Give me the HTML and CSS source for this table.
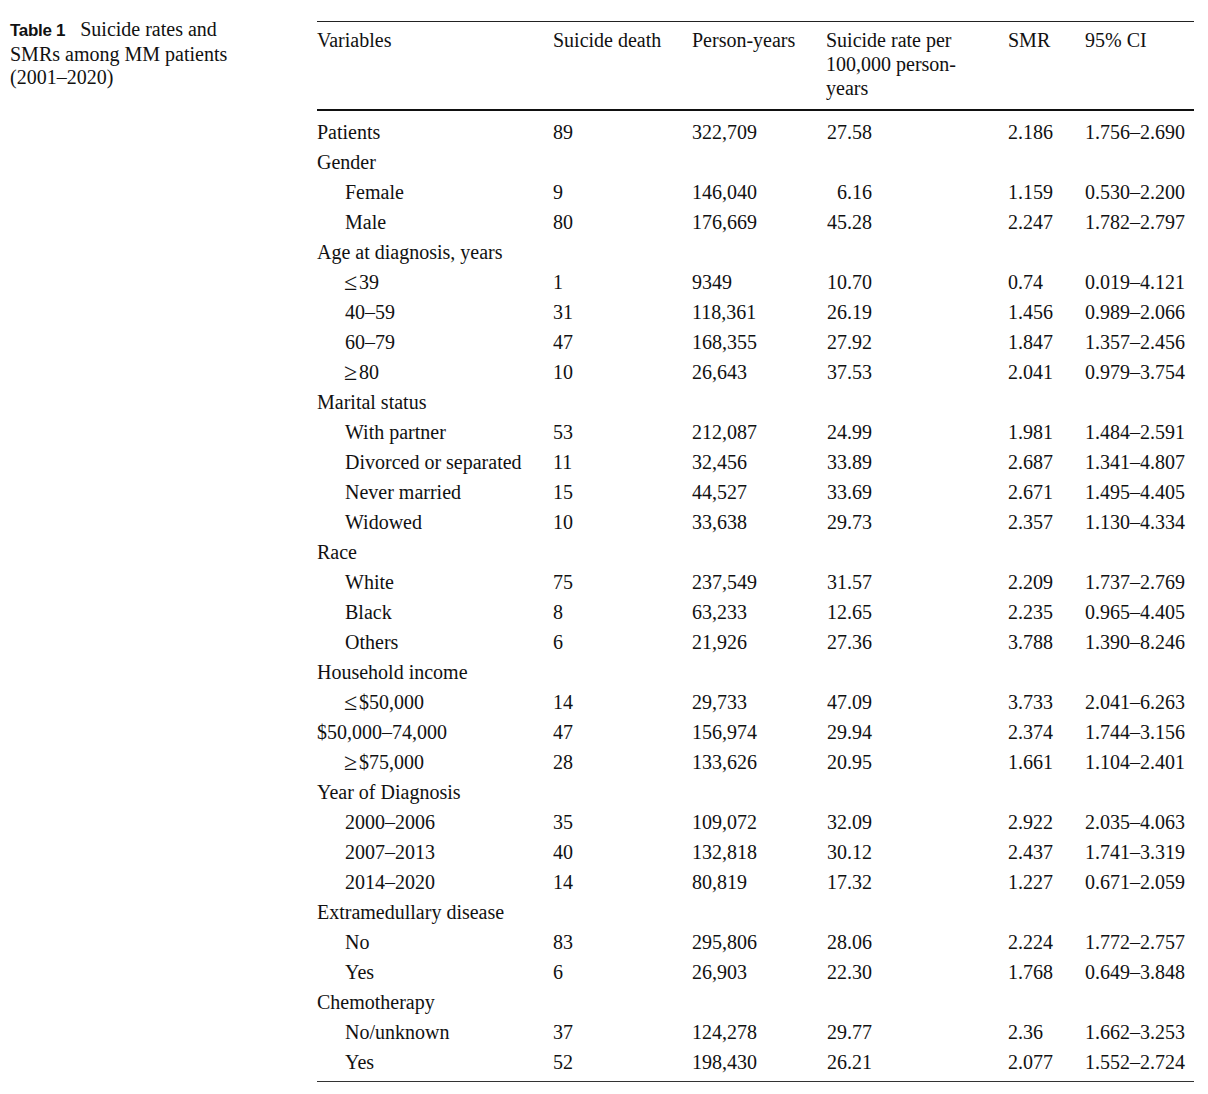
FILE: index.html
```html
<!DOCTYPE html>
<html>
<head>
<meta charset="utf-8">
<link rel="stylesheet" href="styles.css">
</head>
<body>
<div class="page">
  <div class="caption"><span class="label">Table 1</span> Suicide rates and SMRs among MM patients (2001–2020)</div>
  <table class="data">
    <colgroup>
      <col class="c1"><col class="c2"><col class="c3"><col class="c4"><col class="c5"><col class="c6">
    </colgroup>
    <thead>
      <tr>
        <th>Variables</th>
        <th>Suicide death</th>
        <th>Person-years</th>
        <th>Suicide rate per<br>100,000 person-<br>years</th>
        <th>SMR</th>
        <th>95% CI</th>
      </tr>
    </thead>
    <tbody>
      <tr class="first"><td>Patients</td><td>89</td><td>322,709</td><td><span class="r">27.58</span></td><td>2.186</td><td>1.756–2.690</td></tr>
      <tr><td>Gender</td><td></td><td></td><td></td><td></td><td></td></tr>
      <tr><td class="ind">Female</td><td>9</td><td>146,040</td><td><span class="r">6.16</span></td><td>1.159</td><td>0.530–2.200</td></tr>
      <tr><td class="ind">Male</td><td>80</td><td>176,669</td><td><span class="r">45.28</span></td><td>2.247</td><td>1.782–2.797</td></tr>
      <tr><td>Age at diagnosis, years</td><td></td><td></td><td></td><td></td><td></td></tr>
      <tr><td class="ind"><span class="op">≤</span>39</td><td>1</td><td>9349</td><td><span class="r">10.70</span></td><td>0.74</td><td>0.019–4.121</td></tr>
      <tr><td class="ind">40–59</td><td>31</td><td>118,361</td><td><span class="r">26.19</span></td><td>1.456</td><td>0.989–2.066</td></tr>
      <tr><td class="ind">60–79</td><td>47</td><td>168,355</td><td><span class="r">27.92</span></td><td>1.847</td><td>1.357–2.456</td></tr>
      <tr><td class="ind"><span class="op">≥</span>80</td><td>10</td><td>26,643</td><td><span class="r">37.53</span></td><td>2.041</td><td>0.979–3.754</td></tr>
      <tr><td>Marital status</td><td></td><td></td><td></td><td></td><td></td></tr>
      <tr><td class="ind">With partner</td><td>53</td><td>212,087</td><td><span class="r">24.99</span></td><td>1.981</td><td>1.484–2.591</td></tr>
      <tr><td class="ind">Divorced or separated</td><td>11</td><td>32,456</td><td><span class="r">33.89</span></td><td>2.687</td><td>1.341–4.807</td></tr>
      <tr><td class="ind">Never married</td><td>15</td><td>44,527</td><td><span class="r">33.69</span></td><td>2.671</td><td>1.495–4.405</td></tr>
      <tr><td class="ind">Widowed</td><td>10</td><td>33,638</td><td><span class="r">29.73</span></td><td>2.357</td><td>1.130–4.334</td></tr>
      <tr><td>Race</td><td></td><td></td><td></td><td></td><td></td></tr>
      <tr><td class="ind">White</td><td>75</td><td>237,549</td><td><span class="r">31.57</span></td><td>2.209</td><td>1.737–2.769</td></tr>
      <tr><td class="ind">Black</td><td>8</td><td>63,233</td><td><span class="r">12.65</span></td><td>2.235</td><td>0.965–4.405</td></tr>
      <tr><td class="ind">Others</td><td>6</td><td>21,926</td><td><span class="r">27.36</span></td><td>3.788</td><td>1.390–8.246</td></tr>
      <tr><td>Household income</td><td></td><td></td><td></td><td></td><td></td></tr>
      <tr><td class="ind"><span class="op">≤</span>$50,000</td><td>14</td><td>29,733</td><td><span class="r">47.09</span></td><td>3.733</td><td>2.041–6.263</td></tr>
      <tr><td>$50,000–74,000</td><td>47</td><td>156,974</td><td><span class="r">29.94</span></td><td>2.374</td><td>1.744–3.156</td></tr>
      <tr><td class="ind"><span class="op">≥</span>$75,000</td><td>28</td><td>133,626</td><td><span class="r">20.95</span></td><td>1.661</td><td>1.104–2.401</td></tr>
      <tr><td>Year of Diagnosis</td><td></td><td></td><td></td><td></td><td></td></tr>
      <tr><td class="ind">2000–2006</td><td>35</td><td>109,072</td><td><span class="r">32.09</span></td><td>2.922</td><td>2.035–4.063</td></tr>
      <tr><td class="ind">2007–2013</td><td>40</td><td>132,818</td><td><span class="r">30.12</span></td><td>2.437</td><td>1.741–3.319</td></tr>
      <tr><td class="ind">2014–2020</td><td>14</td><td>80,819</td><td><span class="r">17.32</span></td><td>1.227</td><td>0.671–2.059</td></tr>
      <tr><td>Extramedullary disease</td><td></td><td></td><td></td><td></td><td></td></tr>
      <tr><td class="ind">No</td><td>83</td><td>295,806</td><td><span class="r">28.06</span></td><td>2.224</td><td>1.772–2.757</td></tr>
      <tr><td class="ind">Yes</td><td>6</td><td>26,903</td><td><span class="r">22.30</span></td><td>1.768</td><td>0.649–3.848</td></tr>
      <tr><td>Chemotherapy</td><td></td><td></td><td></td><td></td><td></td></tr>
      <tr><td class="ind">No/unknown</td><td>37</td><td>124,278</td><td><span class="r">29.77</span></td><td>2.36</td><td>1.662–3.253</td></tr>
      <tr class="last"><td class="ind">Yes</td><td>52</td><td>198,430</td><td><span class="r">26.21</span></td><td>2.077</td><td>1.552–2.724</td></tr>
    </tbody>
  </table>
</div>
</body>
</html>
```
FILE: styles.css
```css
html, body {
  margin: 0;
  padding: 0;
  background: #fff;
}

body {
  color: #111;
  font-family: "Liberation Serif", "Times New Roman", serif;
  font-size: 20px;
}

.page {
  display: flex;
  align-items: flex-start;
  padding: 18px 0 0 10px;
}

.caption {
  width: 234px;
  flex: none;
  margin-right: 73px;
  line-height: 23.5px;
  font-size: 20px;
}

.caption .label {
  font-family: "Liberation Sans", Arial, sans-serif;
  font-weight: bold;
  font-size: 17px;
  margin-right: 10px;
  letter-spacing: -0.3px;
}

.data {
  margin-top: 3px;
  width: 877px;
  table-layout: fixed;
  border-collapse: collapse;
  border-top: 1px solid #222;
  border-bottom: 1.5px solid #333;
}

.c1 { width: 236px; }
.c2 { width: 139px; }
.c3 { width: 134px; }
.c4 { width: 182px; }
.c5 { width: 77px; }
.c6 { width: 109px; }

.data th {
  font-weight: normal;
  text-align: left;
  vertical-align: top;
  line-height: 24px;
  padding: 6px 0 9px 0;
  border-bottom: 2px solid #111;
}

.data td {
  padding: 0;
  height: 30px;
  line-height: 30px;
  white-space: nowrap;
  text-align: left;
  vertical-align: middle;
}

.data tr.first td {
  padding-top: 6px;
}

.data tr.last td {
  padding-bottom: 4px;
}

.data td.ind {
  padding-left: 28px;
}

.op {
  display: inline-block;
  margin-right: 3px;
  transform: scale(1.2);
}

.r {
  display: inline-block;
  width: 46px;
  text-align: right;
}
```
